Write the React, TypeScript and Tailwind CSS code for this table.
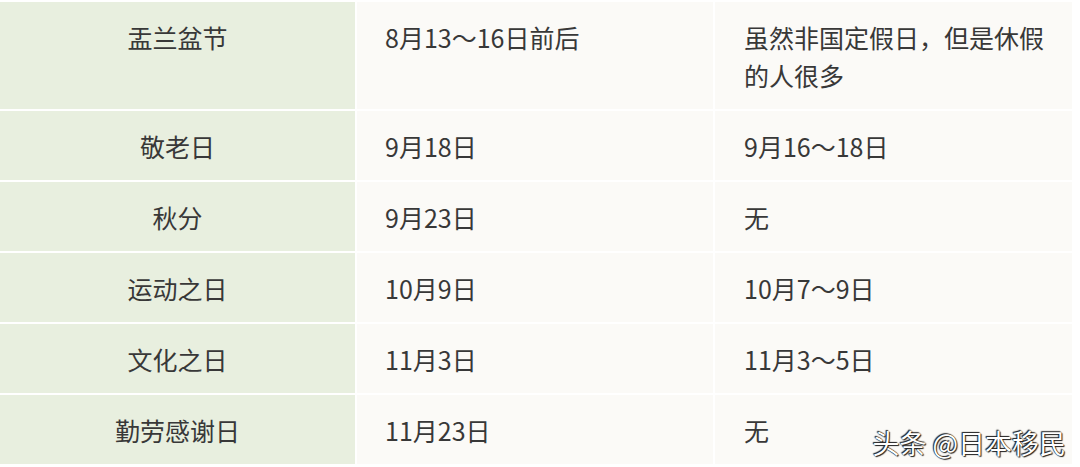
import React from "react";

type Row = {
  name: string;
  date: string;
  note: string[];
};

const rows: Row[] = [
  { name: "盂兰盆节", date: "8月13～16日前后", note: ["虽然非国定假日，但是休假", "的人很多"] },
  { name: "敬老日", date: "9月18日", note: ["9月16～18日"] },
  { name: "秋分", date: "9月23日", note: ["无"] },
  { name: "运动之日", date: "10月9日", note: ["10月7～9日"] },
  { name: "文化之日", date: "11月3日", note: ["11月3～5日"] },
  { name: "勤劳感谢日", date: "11月23日", note: ["无"] },
];

const font = {
  fontFamily: '"Noto Sans CJK SC", "Noto Sans", sans-serif',
};

export default function App() {
  return (
    <div
      className="relative w-[1080px] h-[467px] overflow-hidden bg-white pt-[2px]"
      style={font}
    >
      <div className="grid grid-cols-[355px_356px_357px] gap-[2px] text-[25px] leading-[38px] text-[#383838]">
        {rows.map((row) => (
          <React.Fragment key={row.name}>
            <div className="bg-[#e8efdf] py-[15.5px] text-center">{row.name}</div>
            <div className="bg-[#fbfaf7] py-[15.5px] px-[28px]">{row.date}</div>
            <div className="bg-[#fbfaf7] py-[15.5px] pl-[29px] pr-[20px]">
              {row.note.map((line) => (
                <div key={line} className="whitespace-nowrap">
                  {line}
                </div>
              ))}
            </div>
          </React.Fragment>
        ))}
      </div>

      {/* watermark */}
      <div className="absolute right-[14px] bottom-[6px] text-[27px] leading-[36px] text-white [text-shadow:0_0_1px_#000,1px_1px_1px_#222,-1px_-1px_1px_#222]">
        头条 @日本移民
      </div>
    </div>
  );
}
